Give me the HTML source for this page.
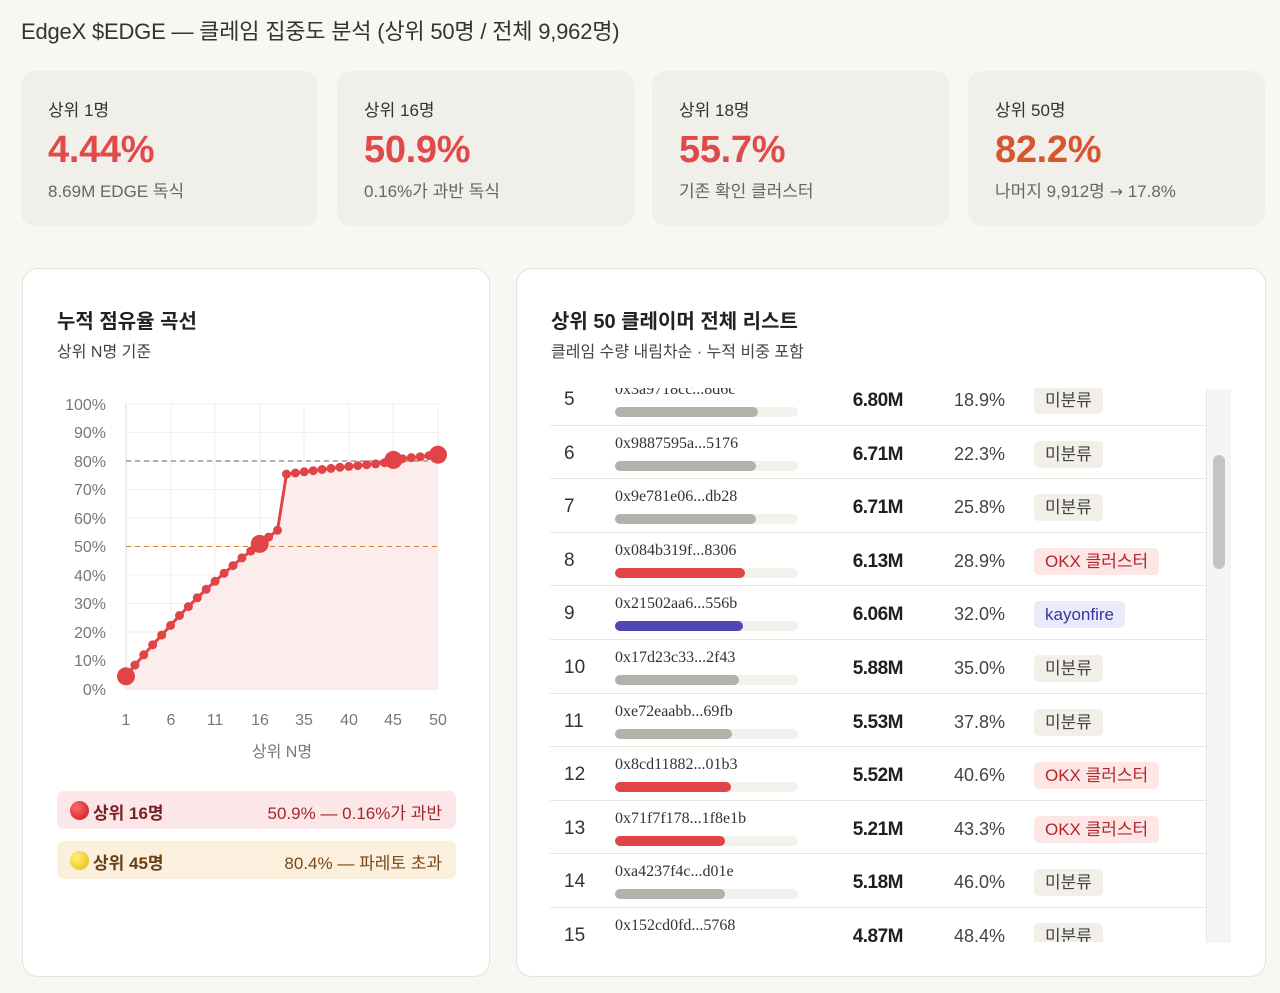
<!DOCTYPE html>
<html><head><meta charset="utf-8"><style>
*{margin:0;padding:0;box-sizing:border-box}
body{width:1280px;height:993px;background:#f8f7f3;font-family:"Liberation Sans","Noto Sans CJK KR",sans-serif;color:#2b2b2b;position:relative;overflow:hidden}
.abs{position:absolute}
h1{position:absolute;left:21px;top:14px;font-size:22px;font-weight:400;color:#333;letter-spacing:-0.2px}
.card{position:absolute;top:71px;width:297px;height:155px;background:#f1efe9;border-radius:14px}
.card .l{position:absolute;left:27px;top:25px;font-size:17px;color:#333}
.card .v{position:absolute;left:27px;top:58px;font-size:38px;font-weight:700;color:#e04a4a;letter-spacing:-0.3px}
.card .s{position:absolute;left:27px;top:106px;font-size:17px;color:#666}
.panel{position:absolute;top:268px;height:709px;background:#fff;border:1px solid #e6e3dc;border-radius:16px}
.pt{position:absolute;left:34px;top:36px;font-size:20px;font-weight:700;color:#222}
.ps{position:absolute;left:34px;top:69px;font-size:16px;color:#444}
.leg{position:absolute;left:34px;width:399px;height:38px;border-radius:7px;font-size:17px;font-weight:700}
.leg .a{position:absolute;left:36px;top:8px}
.leg .b{position:absolute;right:14px;top:8px;font-weight:400}
.dot{position:absolute;left:13px;top:10px;width:19px;height:19px;border-radius:50%}
.clip{position:absolute;left:550px;top:388px;width:681px;height:554px;overflow:hidden}
.row{position:absolute;left:0;width:656px;height:53.6px;border-bottom:1px solid #e8e6e0}
.rk{position:absolute;left:14px;top:17px;font-size:19px;color:#333}
.ad{position:absolute;left:65px;top:9px;font-family:"Liberation Serif",serif;font-size:16px;color:#333}
.bt{position:absolute;left:65px;top:35px;width:183px;height:10px;border-radius:5px;background:#f2f1ec}
.bf{position:absolute;left:0;top:0;height:10px;border-radius:5px}
.am{position:absolute;right:303px;top:18px;font-size:19px;font-weight:700;color:#1f1f1f;letter-spacing:-0.5px}
.pc{position:absolute;right:201px;top:18px;font-size:18px;color:#444}
.tg{position:absolute;left:484px;top:15px;height:27px;padding:0 11px;border-radius:5px;font-size:17px;line-height:27px}
.g{background:#f1efe8;color:#444}.o{background:#fde6e6;color:#b3262c}.k{background:#ebeafc;color:#3b3596}
</style></head><body>
<h1>EdgeX $EDGE — 클레임 집중도 분석 (상위 50명 / 전체 9,962명)</h1>
<div class="card" style="left:21px"><div class="l">상위 1명</div><div class="v">4.44%</div><div class="s">8.69M EDGE 독식</div></div>
<div class="card" style="left:337px"><div class="l">상위 16명</div><div class="v">50.9%</div><div class="s">0.16%가 과반 독식</div></div>
<div class="card" style="left:652px"><div class="l">상위 18명</div><div class="v">55.7%</div><div class="s">기존 확인 클러스터</div></div>
<div class="card" style="left:968px"><div class="l">상위 50명</div><div class="v" style="color:#d9552f">82.2%</div><div class="s">나머지 9,912명 <span style="font-family:'DejaVu Sans',sans-serif;font-size:16px">→</span> 17.8%</div></div>

<div class="panel" style="left:22px;width:468px">
<div class="pt">누적 점유율 곡선</div><div class="ps">상위 N명 기준</div>
<div class="leg" style="top:522px;background:#fbe7e7;color:#a3282c"><div class="dot" style="background:radial-gradient(circle at 35% 35%,#ff6b6b,#c8121a)"></div><div class="a" style="color:#7a1f22">상위 16명</div><div class="b">50.9% — 0.16%가 과반</div></div>
<div class="leg" style="top:572px;background:#fbefdd;color:#7a4a12"><div class="dot" style="background:radial-gradient(circle at 35% 35%,#fff27a,#e5b800)"></div><div class="a" style="color:#6b3f10">상위 45명</div><div class="b">80.4% — 파레토 초과</div></div>
</div>
<svg class="abs" style="left:0;top:0" width="500" height="780">
<g stroke="#efefef" stroke-width="1">
<line x1="126" y1="404" x2="438" y2="404"/><line x1="126" y1="432.5" x2="438" y2="432.5"/><line x1="126" y1="461" x2="438" y2="461"/><line x1="126" y1="489.5" x2="438" y2="489.5"/><line x1="126" y1="518" x2="438" y2="518"/><line x1="126" y1="546.5" x2="438" y2="546.5"/><line x1="126" y1="575" x2="438" y2="575"/><line x1="126" y1="603.5" x2="438" y2="603.5"/><line x1="126" y1="632" x2="438" y2="632"/><line x1="126" y1="660.5" x2="438" y2="660.5"/>
<line x1="171" y1="404" x2="171" y2="689"/><line x1="215" y1="404" x2="215" y2="689"/><line x1="260" y1="404" x2="260" y2="689"/><line x1="304" y1="404" x2="304" y2="689"/><line x1="349" y1="404" x2="349" y2="689"/><line x1="393" y1="404" x2="393" y2="689"/><line x1="438" y1="404" x2="438" y2="689"/>
</g>
<line x1="126" y1="404" x2="126" y2="689" stroke="#ddd"/><line x1="126" y1="689" x2="438" y2="689" stroke="#ddd"/>
<g font-size="16" fill="#777" text-anchor="end" font-family="Liberation Sans,sans-serif">
<text x="106" y="410">100%</text><text x="106" y="438">90%</text><text x="106" y="467">80%</text><text x="106" y="495">70%</text><text x="106" y="524">60%</text><text x="106" y="552">50%</text><text x="106" y="581">40%</text><text x="106" y="609">30%</text><text x="106" y="638">20%</text><text x="106" y="666">10%</text><text x="106" y="695">0%</text>
</g>
<g font-size="16" fill="#777" text-anchor="middle" font-family="Liberation Sans,sans-serif">
<text x="126" y="725">1</text><text x="171" y="725">6</text><text x="215" y="725">11</text><text x="260" y="725">16</text><text x="304" y="725">35</text><text x="349" y="725">40</text><text x="393" y="725">45</text><text x="438" y="725">50</text>
<text x="282" y="757" font-family="Liberation Sans,Noto Sans CJK KR,sans-serif">상위 N명</text>
</g>
<polygon fill="#fdecec" points="126,689 126,676.3 134.9,665.1 143.8,654.8 152.7,644.8 161.7,635.1 170.6,625.4 179.5,615.5 188.4,606.6 197.3,597.8 206.2,589.3 215.1,581.3 224.1,573.3 233,565.6 241.9,557.9 250.8,551.1 259.7,543.9 268.6,537.1 277.5,530.3 286.5,474.1 295.4,473 304.3,471.8 313.2,470.7 322.1,469.5 331,468.4 339.9,467.3 348.9,466.4 357.8,465.6 366.7,464.7 375.6,463.9 384.5,462.7 393.4,459.9 402.3,458.7 411.3,457.6 420.2,456.7 429.1,455.6 438,454.7 438,689"/>
<line x1="126" y1="461" x2="438" y2="461" stroke="#666" stroke-dasharray="5,4"/>
<line x1="126" y1="546.5" x2="438" y2="546.5" stroke="#d9822b" stroke-dasharray="5,4"/>
<polyline fill="none" stroke="#e04446" stroke-width="3" points="126,676.3 134.9,665.1 143.8,654.8 152.7,644.8 161.7,635.1 170.6,625.4 179.5,615.5 188.4,606.6 197.3,597.8 206.2,589.3 215.1,581.3 224.1,573.3 233,565.6 241.9,557.9 250.8,551.1 259.7,543.9 268.6,537.1 277.5,530.3 286.5,474.1 295.4,473 304.3,471.8 313.2,470.7 322.1,469.5 331,468.4 339.9,467.3 348.9,466.4 357.8,465.6 366.7,464.7 375.6,463.9 384.5,462.7 393.4,459.9 402.3,458.7 411.3,457.6 420.2,456.7 429.1,455.6 438,454.7"/>
<g fill="#e04446">
<circle cx="126" cy="676.3" r="9"/><circle cx="134.9" cy="665.1" r="4.5"/><circle cx="143.8" cy="654.8" r="4.5"/><circle cx="152.7" cy="644.8" r="4.5"/><circle cx="161.7" cy="635.1" r="4.5"/><circle cx="170.6" cy="625.4" r="4.5"/><circle cx="179.5" cy="615.5" r="4.5"/><circle cx="188.4" cy="606.6" r="4.5"/><circle cx="197.3" cy="597.8" r="4.5"/><circle cx="206.2" cy="589.3" r="4.5"/><circle cx="215.1" cy="581.3" r="4.5"/><circle cx="224.1" cy="573.3" r="4.5"/><circle cx="233" cy="565.6" r="4.5"/><circle cx="241.9" cy="557.9" r="4.5"/><circle cx="250.8" cy="551.1" r="4.5"/><circle cx="259.7" cy="543.9" r="9"/><circle cx="268.6" cy="537.1" r="4.5"/><circle cx="277.5" cy="530.3" r="4.5"/><circle cx="286.5" cy="474.1" r="4.5"/><circle cx="295.4" cy="473" r="4.5"/><circle cx="304.3" cy="471.8" r="4.5"/><circle cx="313.2" cy="470.7" r="4.5"/><circle cx="322.1" cy="469.5" r="4.5"/><circle cx="331" cy="468.4" r="4.5"/><circle cx="339.9" cy="467.3" r="4.5"/><circle cx="348.9" cy="466.4" r="4.5"/><circle cx="357.8" cy="465.6" r="4.5"/><circle cx="366.7" cy="464.7" r="4.5"/><circle cx="375.6" cy="463.9" r="4.5"/><circle cx="384.5" cy="462.7" r="4.5"/><circle cx="393.4" cy="459.9" r="9"/><circle cx="402.3" cy="458.7" r="4.5"/><circle cx="411.3" cy="457.6" r="4.5"/><circle cx="420.2" cy="456.7" r="4.5"/><circle cx="429.1" cy="455.6" r="4.5"/><circle cx="438" cy="454.7" r="9"/>
</g>
</svg>

<div class="panel" style="left:516px;width:750px">
<div class="pt">상위 50 클레이머 전체 리스트</div><div class="ps">클레임 수량 내림차순 · 누적 비중 포함</div>
<div class="abs" style="left:689px;top:120px;width:25px;height:554px;background:#f5f5f5;border-left:1px solid #e6e6e6"></div>
<div class="abs" style="left:696px;top:186px;width:12px;height:114px;background:#c4c4c4;border-radius:6px"></div>
</div>
<div class="clip">
<div class="row" style="top:-16px"><div class="rk">5</div><div class="ad">0x3a9718cc...8d6c</div><div class="bt"><div class="bf" style="width:143px;background:#b3b1aa"></div></div><div class="am">6.80M</div><div class="pc">18.9%</div><div class="tg g">미분류</div></div>
<div class="row" style="top:37.6px"><div class="rk">6</div><div class="ad">0x9887595a...5176</div><div class="bt"><div class="bf" style="width:141px;background:#b3b1aa"></div></div><div class="am">6.71M</div><div class="pc">22.3%</div><div class="tg g">미분류</div></div>
<div class="row" style="top:91.2px"><div class="rk">7</div><div class="ad">0x9e781e06...db28</div><div class="bt"><div class="bf" style="width:141px;background:#b3b1aa"></div></div><div class="am">6.71M</div><div class="pc">25.8%</div><div class="tg g">미분류</div></div>
<div class="row" style="top:144.8px"><div class="rk">8</div><div class="ad">0x084b319f...8306</div><div class="bt"><div class="bf" style="width:130px;background:#e04446"></div></div><div class="am">6.13M</div><div class="pc">28.9%</div><div class="tg o">OKX 클러스터</div></div>
<div class="row" style="top:198.4px"><div class="rk">9</div><div class="ad">0x21502aa6...556b</div><div class="bt"><div class="bf" style="width:128px;background:#4f46b8"></div></div><div class="am">6.06M</div><div class="pc">32.0%</div><div class="tg k">kayonfire</div></div>
<div class="row" style="top:252px"><div class="rk">10</div><div class="ad">0x17d23c33...2f43</div><div class="bt"><div class="bf" style="width:124px;background:#b3b1aa"></div></div><div class="am">5.88M</div><div class="pc">35.0%</div><div class="tg g">미분류</div></div>
<div class="row" style="top:305.6px"><div class="rk">11</div><div class="ad">0xe72eaabb...69fb</div><div class="bt"><div class="bf" style="width:117px;background:#b3b1aa"></div></div><div class="am">5.53M</div><div class="pc">37.8%</div><div class="tg g">미분류</div></div>
<div class="row" style="top:359.2px"><div class="rk">12</div><div class="ad">0x8cd11882...01b3</div><div class="bt"><div class="bf" style="width:116px;background:#e04446"></div></div><div class="am">5.52M</div><div class="pc">40.6%</div><div class="tg o">OKX 클러스터</div></div>
<div class="row" style="top:412.8px"><div class="rk">13</div><div class="ad">0x71f7f178...1f8e1b</div><div class="bt"><div class="bf" style="width:110px;background:#e04446"></div></div><div class="am">5.21M</div><div class="pc">43.3%</div><div class="tg o">OKX 클러스터</div></div>
<div class="row" style="top:466.4px"><div class="rk">14</div><div class="ad">0xa4237f4c...d01e</div><div class="bt"><div class="bf" style="width:110px;background:#b3b1aa"></div></div><div class="am">5.18M</div><div class="pc">46.0%</div><div class="tg g">미분류</div></div>
<div class="row" style="top:520px"><div class="rk">15</div><div class="ad">0x152cd0fd...5768</div><div class="bt"><div class="bf" style="width:103px;background:#b3b1aa"></div></div><div class="am">4.87M</div><div class="pc">48.4%</div><div class="tg g">미분류</div></div>
</div>
</body></html>
